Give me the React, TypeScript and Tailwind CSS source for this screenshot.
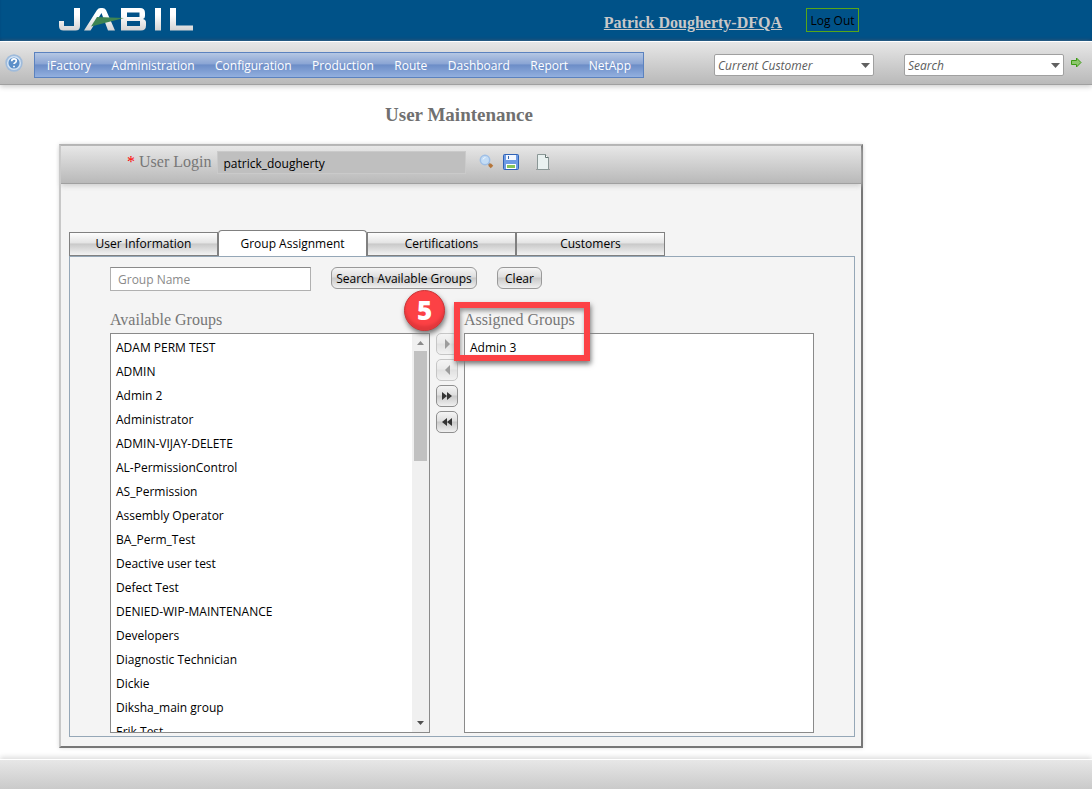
import React from "react";

const menu = ["iFactory", "Administration", "Configuration", "Production", "Route", "Dashboard", "Report", "NetApp"];
const groups = [
  "ADAM PERM TEST", "ADMIN", "Admin 2", "Administrator", "ADMIN-VIJAY-DELETE", "AL-PermissionControl",
  "AS_Permission", "Assembly Operator", "BA_Perm_Test", "Deactive user test", "Defect Test",
  "DENIED-WIP-MAINTENANCE", "Developers", "Diagnostic Technician", "Dickie", "Diksha_main group", "Erik Test",
];
const tabs = ["User Information", "Group Assignment", "Certifications", "Customers"];
const moves = [
  { label: "Add selected", d: "M9 6l5 5l-5 5z", off: true },
  { label: "Remove selected", d: "M14 6l-5 5l5 5z", off: true },
  { label: "Add all", d: "M6 7l5 4l-5 4zM11 7l5 4l-5 4z", off: false },
  { label: "Remove all", d: "M11 7l-5 4l5 4zM16 7l-5 4l5 4z", off: false },
];

function Logo() {
  return (
    <svg width="134" height="24" viewBox="0 0 134 24" role="img" aria-label="Jabil">
      <defs>
        <linearGradient id="silver" gradientUnits="userSpaceOnUse" x1="0" y1="1" x2="0" y2="24">
          <stop offset="0.3" stopColor="#fff" />
          <stop offset="1" stopColor="#d2d2d2" />
        </linearGradient>
      </defs>
      <g fill="url(#silver)">
        <path d="M15 1h6v18q0 4.500-4.500 4.500H4.500Q0 23.500 0 19v-5h5v5h10z" />
        <path d="M25 23.500L38 3q1.300-2 3.500-2h2q2.300 0 3.500 2l9 20.500h-7L42.500 6L31.500 23.500z" />
        <path fillRule="evenodd" d="M62 1h19q5 0 5 5v3q0 2.300-2 3q3 .8 3 3.500v3q0 5-5 5H62zM68 5.500v4.500h12.500V5.500zM68 14v5h13v-5z" />
        <path d="M96 1h6v22.500h-6z" />
        <path d="M111 1h6v17.500h17v5h-23z" />
      </g>
      <path d="M38 10L65 11L32 19.500z" fill="#3e8452" />
    </svg>
  );
}

function Combo({ label }: { label: string }) {
  return (
    <div className="relative w-40">
      <select aria-label={label} className="block h-[22px] w-full appearance-none rounded-xs border border-[#a0a0a0] bg-white pt-px pl-[3px] text-xs italic text-[#5c5c5c]">
        <option>{label}</option>
      </select>
      <svg className="pointer-events-none absolute top-[9px] right-1" width="9" height="5" viewBox="0 0 9 5" fill="#606060">
        <path d="M0 0h9L4.500 5z" />
      </svg>
    </div>
  );
}

export default function App() {
  return (
    <div className="flex min-h-screen flex-col overflow-x-hidden bg-white font-['Open_Sans','Noto_Sans',sans-serif] text-xs text-black">
      <header className="flex h-[41px] items-start bg-[#005288] shadow-[inset_0_-3px_3px_-1px_#003f70]">
        <div className="mt-[7px] ml-[59px]"><Logo /></div>
        <a href="#profile" className="mt-[13px] ml-auto font-['Liberation_Serif',serif] text-base leading-5 font-bold text-[#c8c8c8] underline">Patrick Dougherty-DFQA</a>
        <button className="mt-2 mr-[233px] ml-6 h-6 w-[53px] border border-[#58a618] pt-px whitespace-nowrap">Log Out</button>
      </header>

      <div className="flex h-11 items-start border-t border-b border-t-white border-b-[#a0a0a0] bg-linear-to-b from-[#e7e7e7] to-[#b9b9b9] shadow-[0_2px_5px_#cfcfcf]">
        <button aria-label="Help" className="mt-3 ml-[5px]">
          <svg width="18" height="18" viewBox="0 0 18 18">
            <circle cx="9" cy="9" r="8.700" fill="#9fbbdb" />
            <circle cx="9" cy="9" r="6.300" fill="#5c8fc9" stroke="#d3e3f4" strokeWidth="1.500" />
            <path d="M6.700 7.200q0-2.400 2.300-2.400t2.300 2q0 1.200-1.300 1.900q-1 .5-1 1.400M9 11.700v1.600" fill="none" stroke="#fff" strokeWidth="1.700" />
          </svg>
        </button>
        <nav className="mt-[10px] ml-[11px] flex h-[26px] w-[610px] items-center justify-between border border-[#5b82bf] bg-[linear-gradient(#b5c7e3,#8ba5d4_45%,#6c8dc7_50%,#93b0df)] px-3 pt-px text-white">
          {menu.map((m) => <a key={m} href={"#" + m}>{m}</a>)}
        </nav>
        <div className="mt-3 mr-[10px] ml-auto flex gap-[30px]">
          <Combo label="Current Customer" />
          <div className="flex gap-[7px]">
            <Combo label="Search" />
            <button aria-label="Go" className="h-4">
              <svg width="11" height="11" viewBox="0 0 11 11">
                <path d="M.5 3.500h5v-2.500l4.500 4.500l-4.500 4.500v-2.500h-5z" fill="#8cc66c" stroke="#3c9a14" />
              </svg>
            </button>
          </div>
        </div>
      </div>

      <main className="w-full max-w-[863px] grow pt-5 pb-[10px] pl-[59px]">
        <h1 className="pr-1 pb-[19px] text-center font-['Liberation_Serif',serif] text-[19px] leading-5 font-bold text-[#707070]">User Maintenance</h1>
        <section className="border-2 border-t-[#b2b2b2] border-r-[#777] border-b-[#777] border-l-[#c8c8c8] bg-[#f4f4f4] shadow-[0_0_4px_#ddd]">
          <div className="flex h-[38px] items-start border-b border-[#a0a0a0] bg-linear-to-b from-[#e7e7e7] to-[#b9b9b9] pl-[66px] shadow-[0_2px_5px_#cfcfcf]">
            <label htmlFor="login" className="mt-1.5 font-['Liberation_Serif',serif] text-base leading-5 text-[#777]"><span className="text-[#f00]">*</span> User Login</label>
            <input id="login" defaultValue="patrick_dougherty" className="mt-[5px] ml-[6px] h-[23px] w-[249px] border border-[#cacaca] bg-[#bfbfbf] px-[5px] pt-px" />
            <div className="mt-2 flex">
              <button aria-label="Find" className="ml-[13px]">
                <svg width="16" height="16" viewBox="0 0 16 16">
                  <path d="M9.500 9.500l1.500 1.500" stroke="#9a8d80" strokeWidth="2" />
                  <path d="M10.500 10.500l2.500 2.500" stroke="#b5763a" strokeWidth="3.500" />
                  <circle cx="6" cy="6" r="4.700" fill="#c3dcf5" stroke="#9fbfe6" strokeWidth="1.500" />
                  <path d="M4 5.500q.5-2 2.500-2" fill="none" stroke="#eef6ff" />
                </svg>
              </button>
              <button aria-label="Save" className="ml-2">
                <svg width="16" height="16" viewBox="0 0 16 16">
                  <rect x=".5" y=".5" width="15" height="15" rx="1" fill="#6d9be4" stroke="#2f62b5" />
                  <path d="M3 1h10v5H3z" fill="#f2f7ff" />
                  <path d="M5.500 2v3" stroke="#3566ad" />
                  <path d="M3 10h10v5H3z" fill="#fff" />
                  <path d="M4 12.500h8" stroke="#86c45a" strokeWidth="3" />
                </svg>
              </button>
              <button aria-label="New" className="ml-4">
                <svg width="16" height="16" viewBox="0 0 16 16">
                  <path d="M1 15.500h14" stroke="#9a9a9a" />
                  <path d="M2.500 .5h8l3 3v12h-11z" fill="#e9f1f0" stroke="#8a9796" />
                  <path d="M10.500 .5v3h3" fill="#fff" stroke="#657572" />
                </svg>
              </button>
            </div>
          </div>

          <div className="pt-[46px] pr-1.5 pb-[9px] pl-2">
            <div role="tablist" className="flex h-[26px] items-end">
              {tabs.map((t, i) => (
                <button key={t} role="tab" aria-selected={i === 1} className={i === 1
                  ? "h-[26px] w-[149px] rounded-t-sm border border-b-0 border-[#808080] bg-white"
                  : "h-6 w-[149px] border border-[#808080] bg-[linear-gradient(#fdfdfd,#e4e4e4_45%,#c9c9c9_50%,#f3f3f3)]"}>{t}</button>
              ))}
            </div>
            <div role="tabpanel" className="border border-[#95a7b7] pt-2.5 pr-10 pb-[3px] pl-10">
              <div className="flex h-6 items-start gap-5">
                <input aria-label="Group Name" placeholder="Group Name" className="h-6 w-[201px] border border-[#b0b0b0] border-t-[#8a8a8a] bg-white px-[7px] placeholder:text-[#8a8a8a]" />
                <button className="h-[22px] w-[146px] rounded-md border border-[#999] bg-[linear-gradient(#f5f5f5,#dedede_45%,#c9c9c9_50%,#f0f0f0)] pt-px whitespace-nowrap">Search Available Groups</button>
                <button className="h-[22px] w-[45px] rounded-md border border-[#999] bg-[linear-gradient(#f5f5f5,#dedede_45%,#c9c9c9_50%,#f0f0f0)] pt-px">Clear</button>
              </div>
              <div className="mt-[19px] flex">
                <div className="w-80">
                  <h2 className="h-[23px] font-['Liberation_Serif',serif] text-base leading-5 text-[#777]">Available Groups</h2>
                  <div className="flex h-[400px] border border-[#8a8a8a] bg-white">
                    <ul className="min-w-0 grow overflow-hidden pt-0.5 pl-[5px]">
                      {groups.map((g) => <li key={g} className="h-6 leading-6">{g}</li>)}
                    </ul>
                    <div className="flex w-[17px] flex-col items-center bg-[#f0f0f0] py-[7px]">
                      <svg width="7" height="4" viewBox="0 0 7 4" fill="#8a8a8a"><path d="M0 4h7L3.500 0z" /></svg>
                      <div className="mt-1.5 h-[110px] w-[13px] bg-[#c1c1c1]" />
                      <svg className="mt-auto" width="7" height="4" viewBox="0 0 7 4" fill="#505050"><path d="M0 0h7L3.500 4z" /></svg>
                    </div>
                  </div>
                </div>
                <div className="relative flex w-[34px] flex-col gap-1 pt-[23px] pl-1.5">
                  {moves.map((m) => (
                    <button key={m.label} aria-label={m.label} disabled={m.off} className="h-[22px] w-[22px] rounded-[5px] border border-[#8f8f8f] bg-[linear-gradient(#f5f5f5,#dedede_45%,#c9c9c9_50%,#f0f0f0)] disabled:opacity-45">
                      <svg width="20" height="20" viewBox="1 1 20 20" fill="#333"><path d={m.d} /></svg>
                    </button>
                  ))}
                  <div className="absolute -top-5 -left-[26px] flex h-[41px] w-[41px] items-center justify-center rounded-full border border-[#c93537] bg-[#fc4145] font-['Open_Sans',sans-serif] text-[26px] font-extrabold text-white shadow-[1px_3px_5px_#777,inset_0_-4px_3px_#e2373b]">5</div>
                </div>
                <div className="relative w-[350px]">
                  <h2 className="h-[23px] font-['Liberation_Serif',serif] text-base leading-5 text-[#777]">Assigned Groups</h2>
                  <ul className="h-[400px] border border-[#8a8a8a] bg-white pt-0.5 pl-[5px]">
                    <li className="h-6 leading-6">Admin 3</li>
                  </ul>
                  <div className="pointer-events-none absolute -top-2 -left-[10px] h-[59px] w-[136px] border-[6px] border-[#fc4145] shadow-[1px_3px_5px_#777,inset_1px_3px_4px_#999]" />
                </div>
              </div>
            </div>
          </div>
        </section>
      </main>

      <footer className="h-[30px] border-t border-white bg-linear-to-b from-[#e7e7e7] to-[#cacaca] shadow-[0_-2px_5px_#dcdcdc]" />
    </div>
  );
}
